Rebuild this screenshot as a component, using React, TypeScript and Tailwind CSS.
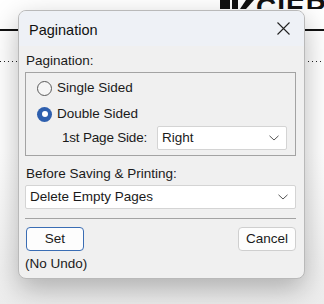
import React from "react";

function Chevron() {
  return (
    <svg width="10" height="6" viewBox="0 0 10 6" className="shrink-0">
      <path d="M0.5 0.8 L5 5 L9.5 0.8" fill="none" stroke="#555" strokeWidth="1" />
    </svg>
  );
}

function Select({ value, className }: { value: string; className?: string }) {
  return (
    <div
      className={
        "flex items-center justify-between bg-white border border-[#d4d4d4] rounded-[2px] pl-[4px] pr-[7px] " +
        (className ?? "")
      }
    >
      <span className="leading-[16px]">{value}</span>
      <Chevron />
    </div>
  );
}

function Radio({ checked, label }: { checked?: boolean; label: string }) {
  return (
    <div className="flex items-center h-[20px] gap-[5px]">
      {checked ? (
        <span className="w-[15px] h-[15px] rounded-full bg-[#2e5fae] flex items-center justify-center">
          <span className="w-[6px] h-[6px] rounded-full bg-white" />
        </span>
      ) : (
        <span className="w-[15px] h-[15px] rounded-full border border-[#5a5a5a] bg-[#f6f6f6]" />
      )}
      <span className="leading-[16px]">{label}</span>
    </div>
  );
}

export default function App() {
  return (
    <div className="relative w-[324px] h-[304px] overflow-hidden bg-gradient-to-b from-white via-white to-[#ededed] font-['Liberation_Sans',Arial,sans-serif] text-[13.5px] text-[#1a1a1a]">
      {/* backdrop content */}
      <div className="absolute left-0 right-0 top-[29px] h-[1.5px] bg-[#111]" />
      <div className="absolute left-0 right-0 top-[61px] h-[1px] bg-[repeating-linear-gradient(90deg,#222_0_1px,transparent_1px_4px)]" />
      <div className="absolute left-[220px] top-0 flex items-end h-[9px] overflow-hidden">
        <svg width="36" height="9" viewBox="0 0 36 9" className="shrink-0">
          <rect x="0" y="0" width="10" height="9" fill="#111" />
          <rect x="12" y="0" width="6" height="9" fill="#111" />
          <polygon points="26,0 34,0 26,9 20,9" fill="#111" />
        </svg>
        <span className="relative top-[13px] font-['Liberation_Sans',Arial,sans-serif] font-bold text-[28px] leading-[28px] tracking-[1px] text-[#111]">
          CIER
        </span>
      </div>

      {/* dialog */}
      <div className="relative z-10 pt-[10px] pl-[18px]">
        <div className="w-[287px] h-[269px] rounded-[8px] border border-[#b9b9b9] bg-[#f0f0f0] overflow-hidden shadow-[0_10px_28px_rgba(0,0,0,0.28)] flex flex-col">
          <div className="h-[35px] bg-[#eef1f6] flex items-center justify-between pl-[10px] pr-[14px]">
            <span className="text-[14.5px] leading-[18px] text-[#111] pt-[2px]">Pagination</span>
            <svg width="13" height="13" viewBox="0 0 13 13">
              <path d="M0.5 0.5 L12.5 12.5 M12.5 0.5 L0.5 12.5" stroke="#222" strokeWidth="1.1" />
            </svg>
          </div>
          <div className="flex flex-col pl-[6px] pr-[8px] pt-[7px]">
            <div className="leading-[16px] pl-[1px]">Pagination:</div>
            <div className="mt-[3px] border border-[#a3a3a3] pt-[5px] pb-[5px] pl-[11px] pr-[8px] flex flex-col">
              <Radio label="Single Sided" />
              <div className="mt-[6px]">
                <Radio checked label="Double Sided" />
              </div>
              <div className="mt-[2px] flex items-center h-[24px]">
                <span className="pl-[25px] w-[120px] leading-[16px] tracking-[-0.2px]">1st Page Side:</span>
                <Select value="Right" className="flex-1 h-[24px]" />
              </div>
            </div>
            <div className="mt-[10px] leading-[16px] pl-[1px]">Before Saving &amp; Printing:</div>
            <Select value="Delete Empty Pages" className="mt-[3px] h-[24px] pr-[5px]" />
            <div className="mt-[9px] h-[1px] bg-[#a3a3a3]" />
            <div className="mt-[8px] flex justify-between">
              <button className="ml-[1px] w-[58px] h-[24px] bg-[#fdfdfd] border border-[#3a6db4] rounded-[4px] leading-[16px] text-[#1a1a1a]">
                Set
              </button>
              <button className="w-[58px] h-[24px] bg-[#fdfdfd] border border-[#cfcfcf] rounded-[4px] leading-[16px] text-[#1a1a1a]">
                Cancel
              </button>
            </div>
            <div className="mt-[5px] leading-[16px]">(No Undo)</div>
          </div>
        </div>
      </div>
    </div>
  );
}
